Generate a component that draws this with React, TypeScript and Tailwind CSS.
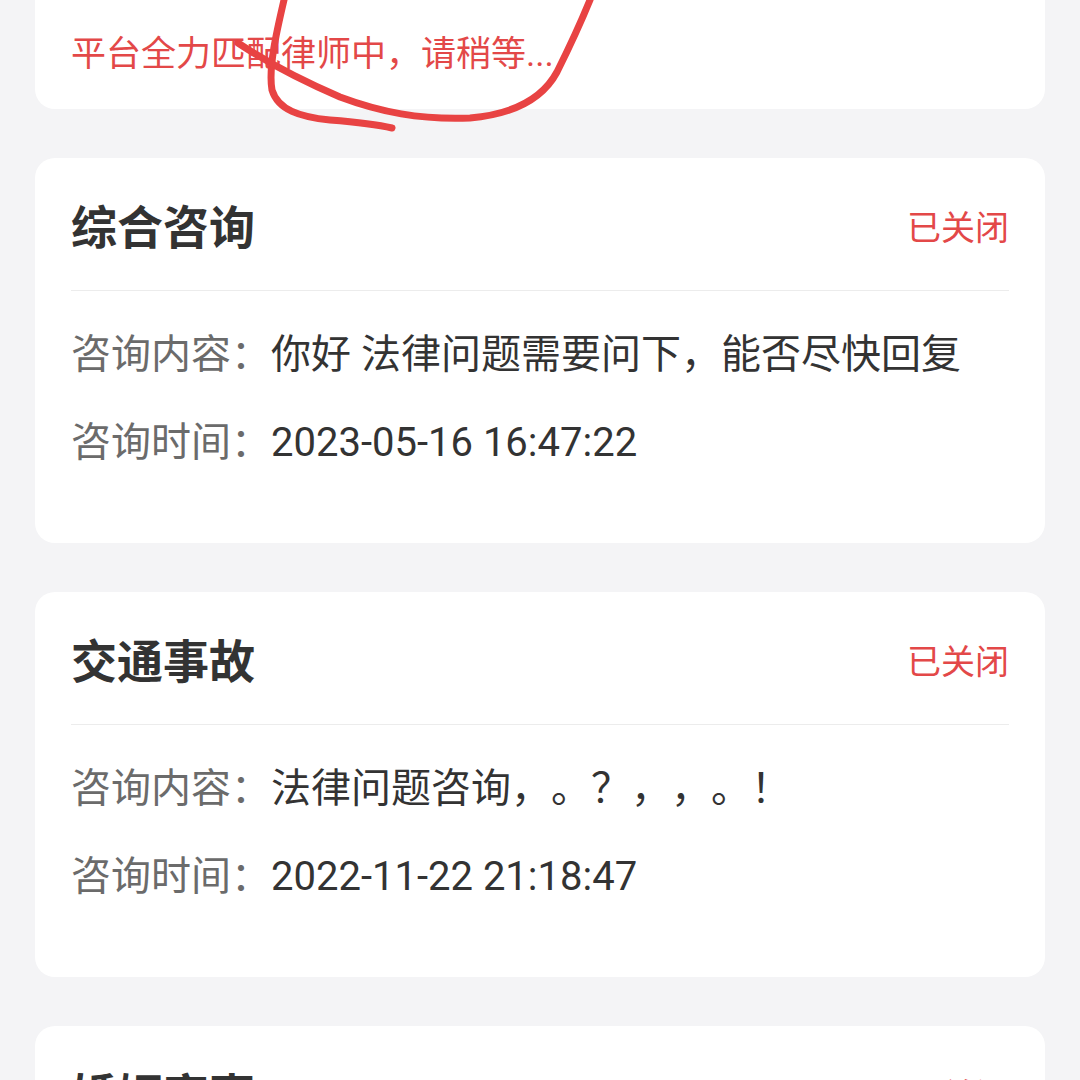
const font = { fontFamily: 'Roboto, "Noto Sans CJK SC", sans-serif' };

interface Consult {
  category: string;
  status: string;
  content: string;
  time: string;
}

const consults: Consult[] = [
  { category: "综合咨询", status: "已关闭", content: "你好 法律问题需要问下，能否尽快回复", time: "2023-05-16 16:47:22" },
  { category: "交通事故", status: "已关闭", content: "法律问题咨询，。？，，。！", time: "2022-11-22 21:18:47" },
  { category: "婚姻家事", status: "已关闭", content: "法律问题咨询", time: "2022-10-08 10:12:05" },
];

function ConsultCard({ item }: { item: Consult }) {
  return (
    <div className="mt-[49px] rounded-[20px] bg-white px-[36px] pb-[76px]">
      {/* Header */}
      <div className="flex items-center justify-between border-b border-[#ececec] pt-[48px] pb-[40px]">
        <h2 className="text-[46px] font-bold leading-[44px] text-[#333333]">{item.category}</h2>
        <span className="text-[34px] leading-[44px] text-[#e34848]">{item.status}</span>
      </div>
      {/* Body */}
      <div className="flex flex-col gap-[40px] pt-[40px] text-[40px] leading-[48px]">
        <div className="flex">
          <span className="text-[#6b6b6b]">咨询内容：</span>
          <span className="text-[#333333]">{item.content}</span>
        </div>
        <div className="flex">
          <span className="text-[#6b6b6b]">咨询时间：</span>
          <span className="text-[#333333]">{item.time}</span>
        </div>
      </div>
    </div>
  );
}

export default function App() {
  return (
    <div className="relative h-[1080px] overflow-hidden bg-[#f4f4f6] px-[35px] [text-spacing-trim:space-all]" style={font}>
      {/* Pending card, scrolled partly out of view */}
      <div className="-mt-[40px] flex h-[149px] items-end rounded-[20px] bg-white px-[36px] pb-[35px]">
        <p className="text-[35px] leading-[38px] text-[#e34848]">平台全力匹配律师中，请稍等...</p>
      </div>

      {consults.map((c, i) => (
        <ConsultCard key={i} item={c} />
      ))}

      {/* Hand-drawn annotation */}
      <svg className="pointer-events-none absolute left-0 top-0" width="1080" height="140" viewBox="0 0 1080 140" fill="none">
        <path
          d="M284 0 C277 30, 268 68, 272 90 C278 110, 300 117, 330 120 C355 122, 375 124, 392 128"
          stroke="#e84343"
          strokeWidth="7"
          strokeLinecap="round"
          strokeLinejoin="round"
        />
        <path
          d="M238 43 C268 63, 300 80, 340 97 C380 112, 420 120, 470 118 C515 114, 543 98, 557 72 C569 48, 581 22, 590 0"
          stroke="#e84343"
          strokeWidth="7"
          strokeLinecap="round"
          strokeLinejoin="round"
        />
      </svg>
    </div>
  );
}
